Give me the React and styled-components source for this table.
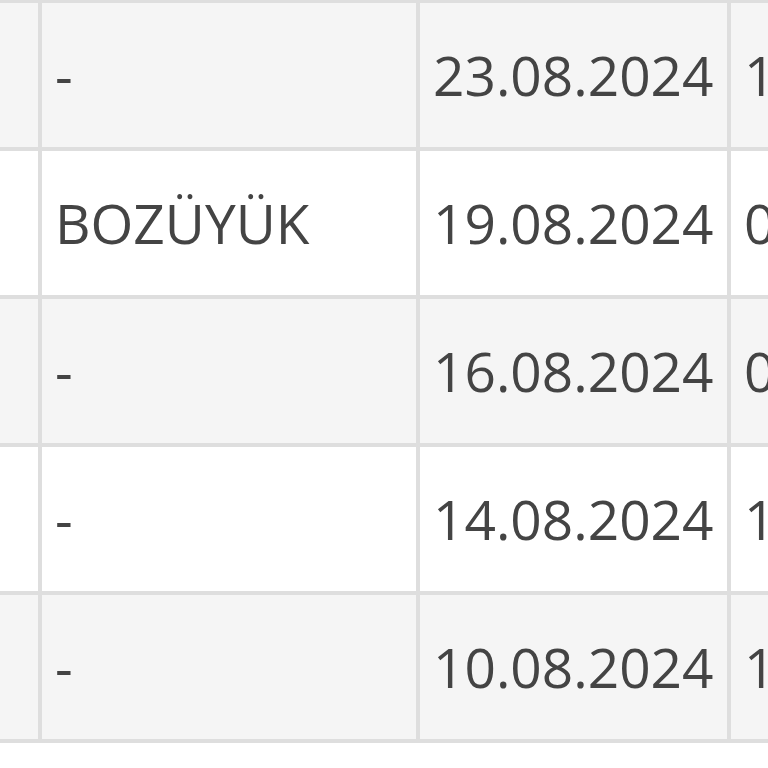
import React from "react";
import styled, { createGlobalStyle } from "styled-components";

const Global = createGlobalStyle`
  html, body { margin: 0; padding: 0; background: #ffffff; overflow: hidden; }
  body { font-family: "Open Sans", "Noto Sans", sans-serif; }
`;

const Table = styled.table`
  border-collapse: separate;
  border-spacing: 0;
  table-layout: fixed;
  width: 900px;
  border-top: 3px solid #dedede;
  font-family: "Open Sans", "Noto Sans", sans-serif;
  font-size: 55px;
  color: #444444;
`;

const Row = styled.tr`
  background: ${(p) => (p.$alt ? "#f5f5f5" : "#ffffff")};
`;

const Cell = styled.td`
  box-sizing: border-box;
  height: 148px;
  padding: 0 0 2px 13px;
  border-right: 4px solid #dedede;
  border-bottom: 4px solid #dedede;
  vertical-align: middle;
  white-space: nowrap;
  overflow: hidden;
  line-height: 1;
`;

const rows = [
  { city: "-", date: "23.08.2024", time: "14:20" },
  { city: "BOZÜYÜK", date: "19.08.2024", time: "09:45" },
  { city: "-", date: "16.08.2024", time: "08:30" },
  { city: "-", date: "14.08.2024", time: "11:10" },
  { city: "-", date: "10.08.2024", time: "16:05" },
];

export default function App() {
  return (
    <>
      <Global />
      <Table>
        <colgroup>
          <col style={{ width: 42 }} />
          <col style={{ width: 378 }} />
          <col style={{ width: 311 }} />
          <col />
        </colgroup>
        <tbody>
          {rows.map((r, i) => (
            <Row key={i} $alt={i % 2 === 0}>
              <Cell></Cell>
              <Cell>{r.city}</Cell>
              <Cell>{r.date}</Cell>
              <Cell>{r.time}</Cell>
            </Row>
          ))}
        </tbody>
      </Table>
    </>
  );
}
